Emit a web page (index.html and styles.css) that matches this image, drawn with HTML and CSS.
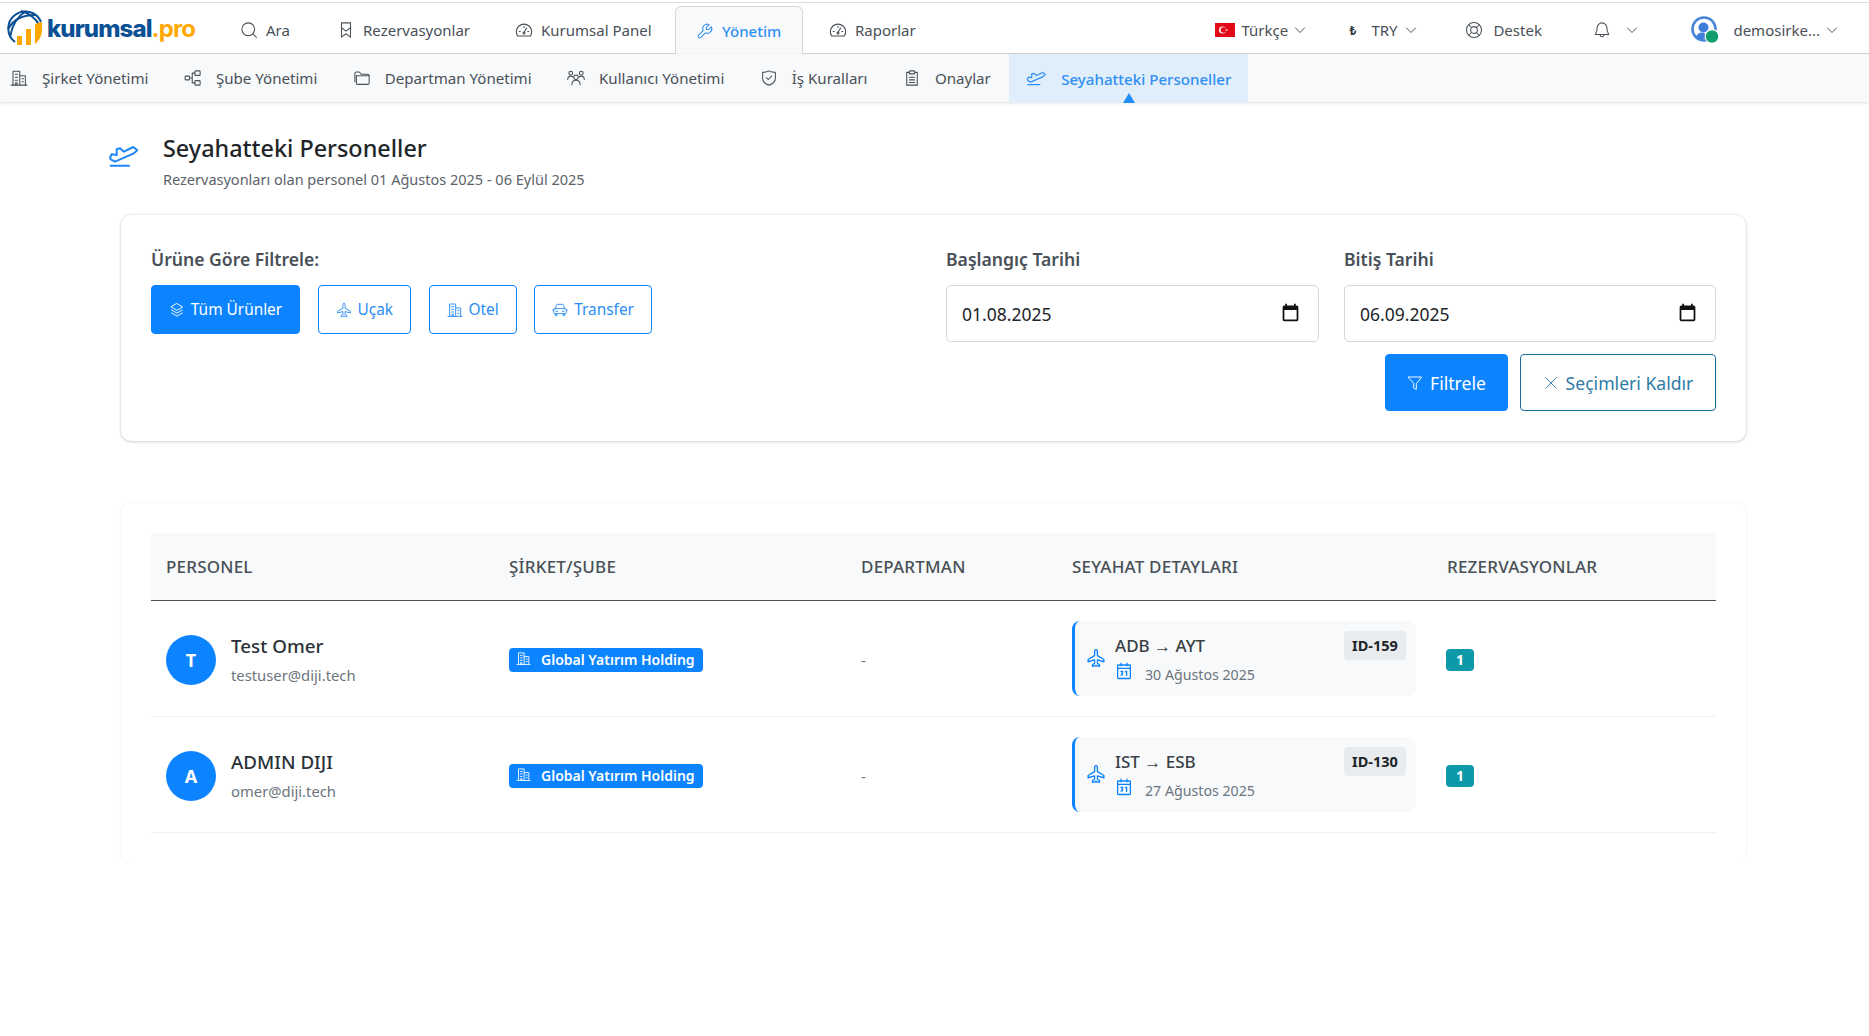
FILE: index.html
```html
<!DOCTYPE html>
<html lang="tr">
<head>
<meta charset="utf-8">
<title>Seyahatteki Personeller</title>
<link rel="stylesheet" href="styles.css">
</head>
<body>
<svg class="defs" width="0" height="0" aria-hidden="true">
  <symbol id="i-search" viewBox="0 0 24 24"><circle cx="11" cy="11" r="8.500"/><path d="M17 17l5 5"/></symbol>
  <symbol id="i-bookmarks" viewBox="0 0 24 24"><path d="M6 2.500h12v19l-6-4.500-6 4.500z"/><path d="M6 9l6 4.500L18 9"/></symbol>
  <symbol id="i-gauge" viewBox="0 0 24 24"><path d="M3.500 20A10.200 10.200 0 1 1 20.500 20z"/><path d="M12 15l3.500-5.500"/><circle cx="12" cy="16" r="1.300"/><path d="M5.500 14h1.500M17 14h1.500M12 7v1.500"/></symbol>
  <symbol id="i-wrench" viewBox="0 0 24 24"><g transform="translate(24 0) scale(-1 1)"><path d="M7 10h3V7L6.500 3.500a6 6 0 0 1 8 8l6 6a2.100 2.100 0 0 1-3 3l-6-6a6 6 0 0 1-8-8z"/></g></symbol>
  <symbol id="i-building" viewBox="0 0 24 24"><path d="M1.500 21.500h21"/><path d="M4 21.500V3h9v18.500"/><path d="M13 9h7.500v12.500"/><path d="M7 7h3M7 11h3M7 15h3M16 13h2M16 17h2M7.500 21.500v-3h2v3"/></symbol>
  <symbol id="i-nodes" viewBox="0 0 24 24"><rect x="1.500" y="9.500" width="6" height="5" rx="1"/><rect x="14.500" y="2.500" width="7" height="6" rx="1"/><rect x="14.500" y="15.500" width="7" height="6" rx="1"/><path d="M7.500 12H11M11 5.500h3.500M11 18.500h3.500M11 5.500v13"/></symbol>
  <symbol id="i-folder" viewBox="0 0 24 24"><path d="M2.500 17V6a2 2 0 0 1 2-2h4l2.500 3H20a1.500 1.500 0 0 1 1.500 1.500V19a1.500 1.500 0 0 1-1.500 1.500H6A1.500 1.500 0 0 1 4.500 19V9"/><path d="M4.500 9H21.500"/></symbol>
  <symbol id="i-users" viewBox="0 0 24 24"><circle cx="12" cy="11" r="3"/><path d="M6.500 21c0-4 2.500-6 5.500-6s5.500 2 5.500 6"/><circle cx="5" cy="5.500" r="2.500"/><circle cx="19" cy="5.500" r="2.500"/><path d="M1 14c0-3 1.500-4.500 4-4.500 1 0 2 .3 2.700 1M23 14c0-3-1.500-4.500-4-4.500-1 0-2 .3-2.700 1"/></symbol>
  <symbol id="i-shield" viewBox="0 0 24 24"><path d="M12 2.500c3 1.500 5.500 2 8.500 2V12c0 4.500-3.500 8-8.500 9.500C7 20 3.500 16.500 3.500 12V4.500c3 0 5.500-.5 8.500-2z"/><path d="M8.500 11.500l2.500 2.500 4.500-4.500"/></symbol>
  <symbol id="i-clip" viewBox="0 0 24 24"><path d="M8.500 4.500H5v17h14v-17h-3.500"/><rect x="8.500" y="2.500" width="7" height="4" rx="1"/><path d="M8.500 11h7M8.500 14.500h7M8.500 18h7"/></symbol>
  <symbol id="i-takeoff" viewBox="0 0 32 24"><path d="M2.700 20.700H21"/><path d="M2 12.700l1.700-3.400 5 .7V4.300L12 3.300l4 3.400L25.300 2l4 3.300-4 3.400L7 16.700l-4.300-2.400z"/></symbol>
  <symbol id="i-chev" viewBox="0 0 24 24"><path d="M3 8l9 9 9-9"/></symbol>
  <symbol id="i-lifebuoy" viewBox="0 0 24 24"><circle cx="12" cy="12" r="10"/><circle cx="12" cy="12" r="4.500"/><path d="M5 5l4 4M19 5l-4 4M5 19l4-4M19 19l-4-4"/></symbol>
  <symbol id="i-bell" viewBox="0 0 24 24"><path d="M12 2.500a6.500 6.500 0 0 0-6.500 6.500c0 6-2 8-2.500 9h18c-.5-1-2.500-3-2.500-9A6.500 6.500 0 0 0 12 2.500z"/><path d="M9.500 18v.5a2.500 2.500 0 0 0 5 0V18"/></symbol>
  <symbol id="i-layers" viewBox="0 0 24 24"><path d="M12 2.500l8.500 5-8.500 5-8.500-5z"/><path d="M4 12l8 4.700 8-4.700M4 16.500l8 4.700 8-4.700"/></symbol>
  <symbol id="i-plane" viewBox="0 0 24 24"><path d="M12 2c1 0 1.700 1.200 1.700 3v4.200l7.800 4.600v2.700l-7.800-2.200v4l2.500 1.800V22L12 21l-4.200 1v-1.900l2.500-1.800v-4l-7.800 2.200v-2.700l7.800-4.600V5c0-1.800.7-3 1.700-3z"/></symbol>
  <symbol id="i-car" viewBox="0 0 24 24"><path d="M5 10l1.500-5a2 2 0 0 1 2-1.500h7a2 2 0 0 1 2 1.500L19 10"/><rect x="2.500" y="10" width="19" height="7.500" rx="1.500"/><path d="M2.500 12.500H1M23 12.500h-1.500M5 17.500v3h2.500v-3M16.500 17.500v3H19v-3M6 14h2.500M15.500 14H18"/></symbol>
  <symbol id="i-filter" viewBox="0 0 24 24"><path d="M2 3h20l-8 10v8.500l-4-2V13z"/></symbol>
  <symbol id="i-x" viewBox="0 0 24 24"><path d="M4 4l16 16M20 4L4 20"/></symbol>
  <symbol id="i-cal" viewBox="0 0 24 24"><rect x="3.500" y="4" width="17" height="18" rx="1"/><path d="M3.500 8.500h17M8 1.500V5M16 1.500V5"/><path d="M8 12.500h2.500L9 15c1.500 0 1.500 3-1 2.500M14 13l1.500-.8V18"/></symbol>
</svg>

<header class="topbar">
  <a class="logo">
    <svg class="logo-mark" viewBox="0 0 36 36" aria-hidden="true">
      <g class="logo-globe"><path d="M8 32A17 17 0 1 1 34 12"/><path d="M1 19C7 9 15 5 29 5"/><path d="M3 27C5 15 11 6 19 1"/><path d="M14 1c8 2 14 6 19 15"/></g>
      <g class="logo-bars"><rect x="10" y="26" width="5" height="9"/><rect x="19" y="19" width="5" height="16"/><path d="M28 34V14l7-2v7c0 6-2 11-7 15z"/></g>
    </svg>
    <span class="logo-text">kurumsal<b>.pro</b></span>
  </a>
  <nav class="mainnav">
    <a class="nav-item n-ara"><svg class="ic"><use href="#i-search"/></svg>Ara</a>
    <a class="nav-item n-rez"><svg class="ic"><use href="#i-bookmarks"/></svg>Rezervasyonlar</a>
    <a class="nav-item n-kur"><svg class="ic"><use href="#i-gauge"/></svg>Kurumsal Panel</a>
    <a class="nav-item nav-active"><svg class="ic"><use href="#i-wrench"/></svg>Yönetim</a>
    <a class="nav-item n-rap"><svg class="ic"><use href="#i-gauge"/></svg>Raporlar</a>
  </nav>
  <div class="utilnav">
    <a class="util u-lang">
      <svg class="flag" viewBox="0 0 20 14" aria-hidden="true"><rect width="20" height="14" fill="#e30a17"/><circle cx="7.500" cy="7" r="3.500" fill="#fff"/><circle cx="8.400" cy="7" r="2.800" fill="#e30a17"/><path d="M10.200 7l2.600-.9-1.600 2.200V5.700l1.600 2.200z" fill="#fff"/></svg>
      Türkçe<svg class="chev"><use href="#i-chev"/></svg></a>
    <a class="util u-cur"><span class="lira">₺</span>TRY<svg class="chev"><use href="#i-chev"/></svg></a>
    <a class="util u-sup"><svg class="ic"><use href="#i-lifebuoy"/></svg>Destek</a>
    <a class="util u-bell"><svg class="ic"><use href="#i-bell"/></svg><svg class="chev"><use href="#i-chev"/></svg></a>
    <a class="util u-user">
      <svg class="user-mark" viewBox="0 0 30 30" aria-hidden="true"><circle class="um-ring" cx="13" cy="14" r="11.500"/><circle cx="12.500" cy="12.500" r="5" fill="#3f7fdc"/><path d="M5 22c1-3 3-4.500 6-4.500 2 0 4 1 5 4.500-3 3-8 3-11 0z" fill="#3f7fdc"/><circle cx="21" cy="21.500" r="6.800" fill="#0f9d6b" stroke="#fff" stroke-width="1.200"/></svg>
      demosirke...<svg class="chev"><use href="#i-chev"/></svg></a>
  </div>
</header>

<nav class="subnav">
  <a class="sub-item"><svg class="ic"><use href="#i-building"/></svg>Şirket Yönetimi</a>
  <a class="sub-item"><svg class="ic"><use href="#i-nodes"/></svg>Şube Yönetimi</a>
  <a class="sub-item"><svg class="ic"><use href="#i-folder"/></svg>Departman Yönetimi</a>
  <a class="sub-item"><svg class="ic"><use href="#i-users"/></svg>Kullanıcı Yönetimi</a>
  <a class="sub-item"><svg class="ic"><use href="#i-shield"/></svg>İş Kuralları</a>
  <a class="sub-item"><svg class="ic"><use href="#i-clip"/></svg>Onaylar</a>
  <a class="sub-item sub-active"><svg class="ic sub-plane"><use href="#i-takeoff"/></svg>Seyahatteki Personeller</a>
</nav>

<main class="page">
  <div class="page-head">
    <svg class="head-ic"><use href="#i-takeoff"/></svg>
    <div>
      <h1>Seyahatteki Personeller</h1>
      <p>Rezervasyonları olan personel 01 Ağustos 2025 - 06 Eylül 2025</p>
    </div>
  </div>

  <section class="card filters">
    <div class="fgroup">
      <div class="flabel">Ürüne Göre Filtrele:</div>
      <div class="chips">
        <button class="chip chip-on"><svg class="ic"><use href="#i-layers"/></svg>Tüm Ürünler</button>
        <button class="chip"><svg class="ic"><use href="#i-plane"/></svg>Uçak</button>
        <button class="chip"><svg class="ic"><use href="#i-building"/></svg>Otel</button>
        <button class="chip"><svg class="ic"><use href="#i-car"/></svg>Transfer</button>
      </div>
    </div>
    <div class="fdate">
      <div class="flabel">Başlangıç Tarihi</div>
      <div class="dateinput"><span>01.08.2025</span><svg class="date-ic" viewBox="0 0 24 24" aria-hidden="true"><path d="M19 4h-1V2h-2v2H8V2H6v2H5a2 2 0 0 0-2 2v14a2 2 0 0 0 2 2h14a2 2 0 0 0 2-2V6a2 2 0 0 0-2-2zm0 16H5V9h14z"/></svg></div>
    </div>
    <div class="fdate">
      <div class="flabel">Bitiş Tarihi</div>
      <div class="dateinput"><span>06.09.2025</span><svg class="date-ic" viewBox="0 0 24 24" aria-hidden="true"><path d="M19 4h-1V2h-2v2H8V2H6v2H5a2 2 0 0 0-2 2v14a2 2 0 0 0 2 2h14a2 2 0 0 0 2-2V6a2 2 0 0 0-2-2zm0 16H5V9h14z"/></svg></div>
    </div>
    <div class="factions">
      <button class="act act-primary"><svg class="ic"><use href="#i-filter"/></svg>Filtrele</button>
      <button class="act act-outline"><svg class="ic"><use href="#i-x"/></svg>Seçimleri Kaldır</button>
    </div>
  </section>

  <section class="card tablecard">
    <table>
      <colgroup><col class="c1"><col class="c2"><col class="c3"><col class="c4"><col class="c5"></colgroup>
      <thead>
        <tr><th>Personel</th><th>Şirket/Şube</th><th>Departman</th><th>Seyahat Detayları</th><th>Rezervasyonlar</th></tr>
      </thead>
      <tbody>
        <tr>
          <td><div class="person"><span class="avatar">T</span><div><div class="pname">Test Omer</div><div class="pmail">testuser@diji.tech</div></div></div></td>
          <td><span class="company"><svg class="ic"><use href="#i-building"/></svg>Global Yatırım Holding</span></td>
          <td class="dash">-</td>
          <td><div class="trip"><svg class="ic trip-ic"><use href="#i-plane"/></svg><div class="trip-body"><div class="route">ADB → AYT</div><div class="tdate"><svg class="ic"><use href="#i-cal"/></svg>30 Ağustos 2025</div></div><span class="tid">ID-159</span></div></td>
          <td><span class="count">1</span></td>
        </tr>
        <tr>
          <td><div class="person"><span class="avatar">A</span><div><div class="pname">ADMIN DIJI</div><div class="pmail">omer@diji.tech</div></div></div></td>
          <td><span class="company"><svg class="ic"><use href="#i-building"/></svg>Global Yatırım Holding</span></td>
          <td class="dash">-</td>
          <td><div class="trip"><svg class="ic trip-ic"><use href="#i-plane"/></svg><div class="trip-body"><div class="route">IST → ESB</div><div class="tdate"><svg class="ic"><use href="#i-cal"/></svg>27 Ağustos 2025</div></div><span class="tid">ID-130</span></div></td>
          <td><span class="count">1</span></td>
        </tr>
      </tbody>
    </table>
  </section>
</main>
</body>
</html>
```
FILE: styles.css
```css
* { box-sizing: border-box; }
html, body { margin: 0; padding: 0; }
body {
  background: #fff;
  color: #212529;
  font-family: "Noto Sans", "Open Sans", sans-serif;
  font-size: 15.100px;
  overflow-x: hidden;
}
.defs { position: absolute; }
symbol { overflow: visible; }
.ic, .head-ic, .chev {
  fill: none;
  stroke: currentColor;
  stroke-width: 1.4;
  stroke-linecap: round;
  stroke-linejoin: round;
  flex: none;
}
.ic { width: 18px; height: 18px; }

/* Top bar */
.topbar {
  display: flex;
  align-items: stretch;
  height: 52px;
  margin-top: 2px;
  border-top: 1px solid #dedfe1;
  border-bottom: 1px solid #d3d6da;
  background: #fff;
  color: #495057;
}
.logo { display: flex; align-items: center; gap: 4px; padding-left: 7px; width: 218px; }
.logo-mark { width: 36px; height: 36px; flex: none; }
.logo-globe { fill: none; stroke: #0b4f94; stroke-width: 2; }
.logo-bars { fill: #ffa800; }
.logo-text { font-family: "Inter", sans-serif; font-weight: 800; font-size: 24px; letter-spacing: -.9px; color: #0b4f94; }
.logo-text b { color: #ffa800; font-weight: 700; }
.mainnav { display: flex; align-items: stretch; margin-left: 22px; }
.nav-item { display: flex; align-items: center; gap: 8px; white-space: nowrap; margin-top: 4px; font-size: 15px; }
.n-ara { width: 97px; }
.n-rez { width: 178px; }
.n-kur { width: 160px; }
.n-rap { margin-left: 26px; }
.nav-active {
  width: 128px;
  margin-top: 3px;
  margin-bottom: -1px;
  padding: 0 0 0 20px;
  color: #2f8ff3;
  background: #f8f9fa;
  border: 1px solid #d3d6da;
  border-bottom: none;
  border-radius: 6px 6px 0 0;
  font-weight: 500;
}
.utilnav { display: flex; align-items: center; margin-left: auto; padding-top: 4px; font-size: 15px; }
.util { display: flex; align-items: center; gap: 6px; white-space: nowrap; }
.u-lang { width: 134px; }
.u-cur { width: 116px; gap: 7px; }
.u-sup { width: 128px; gap: 10px; }
.u-bell { width: 98px; gap: 15px; }
.u-user { gap: 6px; padding-right: 31px; }
.flag { width: 20px; height: 14px; flex: none; }
.chev { width: 12px; height: 12px; stroke-width: 2; }
.lira { font-weight: 700; font-size: 12px; width: 15px; color: #343a40; }
.user-mark { width: 30px; height: 30px; flex: none; margin-right: 6px; }
.um-ring { fill: none; stroke: #4a86d8; stroke-width: 2.600; }

/* Sub navigation */
.subnav {
  display: flex;
  align-items: stretch;
  height: 48px;
  padding-left: 10px;
  background: #f8f9fa;
  box-shadow: 0 1px 3px rgba(0, 0, 0, .14);
  color: #495057;
  position: relative;
}
.sub-item { display: flex; align-items: center; gap: 14px; white-space: nowrap; margin-right: 35.400px; }
.sub-active {
  position: relative;
  margin: 0 0 -1px -17px;
  padding: 0 17px;
  color: #2f8ff3;
  background: #e0edfa;
  font-weight: 500;
}
.sub-plane { width: 21px; height: 16px; stroke-width: 1.900; }
.sub-active::after {
  content: "";
  position: absolute;
  left: 50%;
  bottom: 0;
  margin-left: -6px;
  border-left: 6px solid transparent;
  border-right: 6px solid transparent;
  border-bottom: 10px solid #1f8ff5;
}

/* Page */
.page { padding: 0 123px 0 121px; }
.page-head { display: flex; align-items: center; gap: 23px; margin: 30px 0 0 -13px; height: 56px; }
.head-ic { width: 32px; height: 24px; color: #1f86f5; stroke-width: 2; margin-top: -6px; }
.page-head h1 { margin: 0; font-size: 23.400px; line-height: 32px; font-weight: 500; color: #212529; }
.page-head p { margin: 5px 0 0; font-size: 14.500px; line-height: 20px; color: #5c636a; }

.card { background: #fff; border-radius: 10px; }
.filters {
  display: grid;
  grid-template-columns: 1fr 373px 372px;
  column-gap: 25px;
  row-gap: 12px;
  margin-top: 27px;
  padding: 30px;
  box-shadow: 0 0 3px rgba(0, 0, 0, .12), 0 1px 3px rgba(0, 0, 0, .14);
}
.flabel { height: 40px; padding-top: 1px; font-size: 17.600px; line-height: 26px; font-weight: 600; color: #495057; }
.chips { display: flex; gap: 17.500px; }
.chip {
  display: flex;
  align-items: center;
  justify-content: center;
  gap: 6px;
  height: 49px;
  padding: 0 17px;
  background: #fff;
  border: 1px solid #0d84ff;
  border-radius: 4px;
  color: #2a8cf5;
  font: inherit;
  font-size: 15.400px;
  white-space: nowrap;
}
.chip-on { width: 149px; padding: 0; background: #0d84ff; color: #fff; }
.chip .ic { width: 16px; height: 16px; }
.dateinput {
  display: flex;
  align-items: center;
  justify-content: space-between;
  height: 57px;
  padding: 0 17px 0 15px;
  border: 1px solid #d5d7da;
  border-radius: 5px;
  font-size: 17.500px;
  color: #212529;
}
.date-ic { width: 21px; height: 21px; fill: #111; margin-top: -2px; }
.factions { grid-column: 2 / 4; display: flex; justify-content: flex-end; gap: 12px; }
.act {
  display: flex;
  align-items: center;
  justify-content: center;
  gap: 7px;
  height: 57px;
  border-radius: 4px;
  font: inherit;
  font-size: 17.600px;
}
.act .ic { width: 16px; height: 16px; }
.act-primary { width: 123px; background: #0d84ff; border: 1px solid #0d84ff; color: #fff; }
.act-outline { width: 196px; background: #fff; border: 1px solid #1f6f9c; color: #2f7ba6; }

.tablecard { margin-top: 62px; padding: 30px; box-shadow: 0 0 3px rgba(0, 0, 0, .07); }
table { width: 100%; border-collapse: collapse; table-layout: fixed; }
.c1 { width: 343px; }
.c2 { width: 352px; }
.c3 { width: 211px; }
.c4 { width: 375px; }
th {
  height: 67px;
  padding: 0 15px;
  background: #f8f9fa;
  border-bottom: 1.500px solid #495057;
  text-align: left;
  text-transform: uppercase;
  font-size: 17px;
  font-weight: 500;
  letter-spacing: .2px;
  color: #495057;
}
td { height: 116px; padding: 3px 15px 0; border-bottom: 1px solid #f0f1f3; vertical-align: middle; }
.person { display: flex; align-items: center; gap: 15px; }
.avatar {
  display: flex;
  align-items: center;
  justify-content: center;
  width: 50px;
  height: 50px;
  border-radius: 50%;
  background: #0d84ff;
  color: #fff;
  font-size: 18px;
  font-weight: 700;
  flex: none;
}
.pname { font-size: 18.800px; line-height: 26px; font-weight: 500; color: #2b3138; }
.pmail { margin-top: 5px; font-size: 14.800px; line-height: 22px; color: #6c757d; }
.company {
  display: inline-flex;
  align-items: center;
  gap: 10px;
  height: 24px;
  padding: 0 8px 0 7px;
  background: #0d84ff;
  border-radius: 4px;
  color: #fff;
  font-size: 14px;
  font-weight: 600;
}
.company .ic { width: 15px; height: 15px; margin-top: -3px; }
.dash { color: #6c757d; }
.trip {
  display: flex;
  align-items: center;
  width: 344px;
  height: 75px;
  margin-top: -3px;
  padding: 0 10px 0 11px;
  background: #f8f9fa;
  border-left: 3px solid #0d84ff;
  border-radius: 8px;
}
.trip-ic { width: 20px; height: 26px; color: #0d84ff; stroke-width: 1.600; }
.trip-body { flex: 1; margin-left: 9px; margin-top: 7px; }
.route { font-size: 17px; line-height: 24px; font-weight: 500; color: #3a4046; margin-top: -4px; }
.tdate { display: flex; align-items: center; gap: 12px; margin-top: 6px; font-size: 14.200px; line-height: 22px; color: #6c757d; }
.tdate .ic { width: 18px; height: 22px; color: #0d84ff; margin-top: -8px; stroke-width: 1.700; }
.tid {
  align-self: flex-start;
  margin-top: 10px;
  display: flex;
  align-items: center;
  justify-content: center;
  width: 62px;
  height: 29px;
  background: #e9ecef;
  border-radius: 4px;
  font-size: 14.500px;
  font-weight: 700;
  color: #212529;
}
.count {
  display: inline-flex;
  align-items: center;
  justify-content: center;
  width: 28px;
  height: 22px;
  background: #0d9aa8;
  border-radius: 4px;
  color: #fff;
  font-size: 14px;
  font-weight: 700;
  margin-left: -1px;
}
```
